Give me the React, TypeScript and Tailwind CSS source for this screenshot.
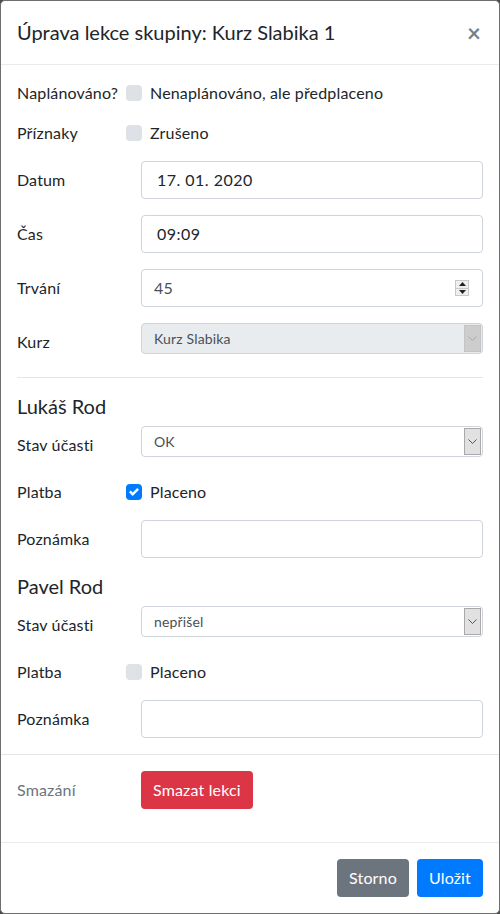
import React from "react";

function Checkbox({ checked }: { checked?: boolean }) {
  return (
    <span
      className={
        checked
          ? "flex h-4 w-4 shrink-0 items-center justify-center rounded-[4px] bg-[#007bff]"
          : "flex h-4 w-4 shrink-0 rounded-[4px] bg-[#dee2e6]"
      }
    >
      {checked && (
        <svg width="10" height="10" viewBox="0 0 8 8">
          <path fill="#fff" d="M6.564.75l-3.59 3.612-1.538-1.55L0 4.26l2.974 2.99L8 2.193z" />
        </svg>
      )}
    </span>
  );
}

function Arrow({ disabled }: { disabled?: boolean }) {
  return (
    <span
      className={
        disabled
          ? "flex h-full w-[17px] shrink-0 items-center justify-center border border-[#c4c4c4] bg-[#cdcdcd]"
          : "flex h-full w-[17px] shrink-0 items-center justify-center border border-[#a9a9a9] bg-[#e1e1e1]"
      }
    >
      <svg width="9" height="5" viewBox="0 0 9 5">
        <path
          d="M0.5 0.5 L4.5 4.5 L8.5 0.5"
          fill="none"
          stroke={disabled ? "#a8a8a8" : "#555"}
          strokeWidth="1"
        />
      </svg>
    </span>
  );
}

function Select({ value, disabled }: { value: string; disabled?: boolean }) {
  return (
    <div
      className={
        disabled
          ? "flex h-[31px] flex-1 items-center rounded-[4px] border border-[#ced4da] bg-[#e9ecef] p-[1px] pl-0"
          : "flex h-[31px] flex-1 items-center rounded-[4px] border border-[#ced4da] bg-white p-[1px] pl-0"
      }
    >
      <span className="flex-1 pl-3 text-[14px] leading-[21px] text-[#495057]">{value}</span>
      <Arrow disabled={disabled} />
    </div>
  );
}

function Input({ children }: { children?: React.ReactNode }) {
  return (
    <div className="flex h-[38px] flex-1 items-center rounded-[4px] border border-[#ced4da] bg-white px-3 text-[16px] text-[#495057]">
      {children}
    </div>
  );
}

function Label({ children, muted }: { children: React.ReactNode; muted?: boolean }) {
  return (
    <div
      className={
        muted
          ? "w-[124px] shrink-0 pt-[7px] text-[16px] leading-6 text-[#6c757d]"
          : "w-[124px] shrink-0 pt-[7px] text-[16px] leading-6"
      }
    >
      {children}
    </div>
  );
}

function Person({ name, status, paid }: { name: string; status: string; paid?: boolean }) {
  return (
    <>
      <h5 className="mb-2 text-[20px] font-normal leading-6 tracking-normal">{name}</h5>
      <div className="mb-4 flex items-start">
        <Label>Stav účasti</Label>
        <Select value={status} />
      </div>
      <div className="mb-4 flex h-[31px] items-start pt-[7px]">
        <div className="w-[109px] shrink-0 leading-6">Platba</div>
        <div className="flex h-6 items-center">
          <Checkbox checked={paid} />
          <span className="ml-2 leading-6">Placeno</span>
        </div>
      </div>
      <div className="flex items-start">
        <Label>Poznámka</Label>
        <Input />
      </div>
    </>
  );
}

export default function App() {
  return (
    <div className="h-[914px] w-[500px] bg-[#4a4a4a] font-['Lato',sans-serif] text-[16px] tracking-[0.01em] text-[#212529]">
      <div className="flex h-full flex-col rounded-[5px] border border-[#6e6e6e] bg-white">
        <div className="flex items-start justify-between border-b border-[#e9ecef] p-4">
          <h5 className="text-[20px] font-normal leading-[30px] tracking-normal">Úprava lekce skupiny: Kurz Slabika 1</h5>
          <button className="mr-[2px] mt-[1px] text-[24px] font-bold leading-[30px] text-black opacity-50">×</button>
        </div>

        <div className="p-4">
          <div className="mb-4 flex h-6 items-center">
            <div className="w-[109px] shrink-0">Naplánováno?</div>
            <Checkbox />
            <span className="ml-2">Nenaplánováno, ale předplaceno</span>
          </div>
          <div className="mb-4 flex h-6 items-center">
            <div className="w-[109px] shrink-0">Příznaky</div>
            <Checkbox />
            <span className="ml-2">Zrušeno</span>
          </div>
          <div className="mb-4 flex items-start">
            <Label>Datum</Label>
            <Input>
              <span className="pl-[3px] tracking-[0.03em] text-[#212529]">17. 01. 2020</span>
            </Input>
          </div>
          <div className="mb-4 flex items-start">
            <Label>Čas</Label>
            <Input>
              <span className="pl-[3px] tracking-[0.03em] text-[#212529]">09:09</span>
            </Input>
          </div>
          <div className="mb-4 flex items-start">
            <Label>Trvání</Label>
            <div className="flex h-[38px] flex-1 items-center rounded-[4px] border border-[#ced4da] bg-white pl-3 pr-[13px] text-[16px] text-[#495057]">
              <span className="flex-1">45</span>
              <span className="flex h-4 w-[14px] flex-col border border-[#c8c8c8] bg-[#efefef]">
                <span className="flex flex-1 items-center justify-center border-b border-[#c8c8c8]">
                  <svg width="7" height="4" viewBox="0 0 7 4">
                    <path d="M0 4 L3.5 0 L7 4 Z" fill="#222" />
                  </svg>
                </span>
                <span className="flex flex-1 items-center justify-center">
                  <svg width="7" height="4" viewBox="0 0 7 4">
                    <path d="M0 0 L3.5 4 L7 0 Z" fill="#222" />
                  </svg>
                </span>
              </span>
            </div>
          </div>
          <div className="flex items-start">
            <Label>Kurz</Label>
            <Select value="Kurz Slabika" disabled />
          </div>

          <hr className="mb-4 mt-[23px] border-t border-[#e5e5e5]" />

          <Person name="Lukáš Rod" status="OK" paid />
          <div className="h-4" />
          <Person name="Pavel Rod" status="nepřišel" />
        </div>

        <div className="border-t border-[#e5e5e5] px-4 pb-[17px] pt-4">
          <div className="mb-4 flex items-start">
            <Label muted>Smazání</Label>
            <button className="h-[38px] rounded-[4px] bg-[#dc3545] px-3 text-[16px] text-white">Smazat lekci</button>
          </div>
        </div>

        <div className="flex justify-end gap-2 border-t border-[#e9ecef] px-4 py-4">
          <button className="h-[38px] rounded-[4px] bg-[#6c757d] px-3 text-[16px] text-white">Storno</button>
          <button className="h-[38px] rounded-[4px] bg-[#007bff] px-3 text-[16px] text-white">Uložit</button>
        </div>
      </div>
    </div>
  );
}
